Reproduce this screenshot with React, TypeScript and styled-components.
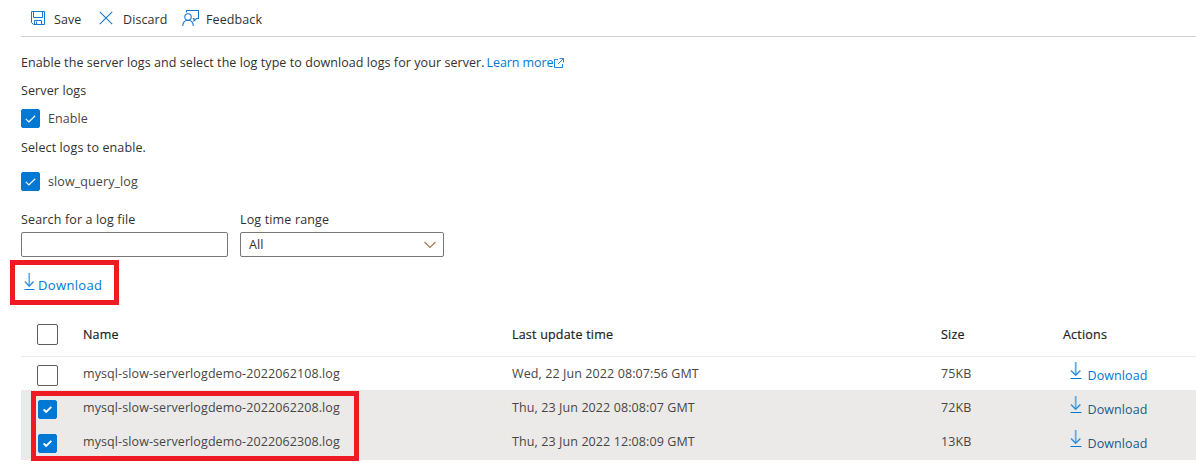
import React from 'react';
import styled, { createGlobalStyle } from 'styled-components';

const GlobalStyle = createGlobalStyle`
  * { box-sizing: border-box; }
  body {
    margin: 0;
    background: #fff;
    color: #323130;
    font: 12.5px/18px 'Open Sans', 'Noto Sans', sans-serif;
    letter-spacing: 0.1px;
    overflow: hidden;
  }
`;

const Page = styled.main`
  height: 468px;
  padding-left: 21px;
  display: flex;
  flex-direction: column;
`;

const Toolbar = styled.div`
  height: 37px;
  flex: none;
  display: flex;
  padding-left: 9px;
  border-bottom: 1px solid #d2d0ce;
`;

const Command = styled.button<{ $width: number; $gap: number }>`
  width: ${(p) => p.$width}px;
  height: 36px;
  padding: 0 0 1px;
  border: 0;
  background: none;
  display: flex;
  align-items: center;
  gap: ${(p) => p.$gap}px;
  font: inherit;
  color: inherit;
  letter-spacing: inherit;
  text-align: left;
  svg { flex: none; }
  span { padding-top: 4px; }
`;

const Line = styled.p<{ $top: number; $spacing?: number }>`
  margin: ${(p) => p.$top}px 0 0;
  height: 18px;
  display: flex;
  flex: none;
  white-space: nowrap;
  letter-spacing: ${(p) => p.$spacing ?? 0.12}px;
`;

const Link = styled.a`
  display: flex;
  align-items: center;
  gap: 1px;
  margin-left: 2px;
  color: #0078d4;
  letter-spacing: -0.1px;
`;

const CheckField = styled.label<{ $top: number }>`
  margin-top: ${(p) => p.$top}px;
  height: 19px;
  flex: none;
  display: flex;
  align-items: center;
  gap: 8px;
  color: #484644;
`;

const Box = styled.span<{ $on?: boolean; $size: number }>`
  width: ${(p) => p.$size}px;
  height: ${(p) => p.$size}px;
  flex: none;
  display: flex;
  align-items: center;
  justify-content: center;
  border-radius: 2px;
  border: 1px solid ${(p) => (p.$on ? '#0078d4' : '#605e5c')};
  background: ${(p) => (p.$on ? '#0078d4' : '#fff')};
`;

const Filters = styled.div`
  display: flex;
  flex: none;
  gap: 12px;
  margin-top: 20px;
`;

const Field = styled.div<{ $width: number }>`
  width: ${(p) => p.$width}px;
  display: flex;
  flex-direction: column;
  gap: 3px;
  letter-spacing: 0.15px;
`;

const Control = styled.div`
  height: 25px;
  border: 1px solid #7a7877;
  border-radius: 2px;
  padding: 0 7px 0 8px;
  display: flex;
  align-items: center;
  justify-content: space-between;
`;

const BulkDownload = styled.div`
  width: 109px;
  height: 45px;
  flex: none;
  margin: 3px 0 0 -11px;
  border: 5px solid #ee1b24;
  padding: 8px 0 0 9px;
  display: flex;
  gap: 3px;
  color: #0078d4;
  font-size: 13px;
  letter-spacing: 0.35px;
  span { padding-top: 3px; }
`;

const Grid = styled.div`
  margin-top: 7px;
  position: relative;
`;

const GridRow = styled.div<{ $head?: boolean; $selected?: boolean; $height: number; $bottom?: number }>`
  height: ${(p) => p.$height}px;
  padding-bottom: ${(p) => p.$bottom ?? 0}px;
  display: grid;
  grid-template-columns: 62px 429px 429px 122px 1fr;
  align-items: center;
  color: ${(p) => (p.$head ? '#201f1e' : '#484644')};
  background: ${(p) => (p.$selected ? '#ebeae8' : '#fff')};
  border-bottom: ${(p) => (p.$head ? '1px solid #edebe9' : '0')};
`;

const HeadCell = styled.span`
  padding-top: 2px;
  letter-spacing: 0.2px;
  -webkit-text-stroke: 0.2px currentColor;
`;

const CheckCell = styled.div<{ $left: number; $drop: number }>`
  padding: ${(p) => p.$drop}px 0 0 ${(p) => p.$left}px;
`;

const ActionLink = styled.a<{ $dim?: boolean }>`
  display: flex;
  gap: 6px;
  padding-left: 6.5px;
  height: 24px;
  color: ${(p) => (p.$dim ? '#205a85' : '#0078d4')};
  span { padding-top: 5px; }
`;

const Highlight = styled.div`
  position: absolute;
  left: 10px;
  top: 79px;
  width: 328px;
  height: 70px;
  border: 5px solid #ee1b24;
`;

const SaveIcon = () => (
  <svg width="16" height="16" viewBox="0 0 16 16" fill="none" stroke="#1877cc">
    <path d="M1.5 1.5h13v13h-11l-2-2zM3.5 1.5v6h9v-6M4.5 14.500v-4h7v4M6.500 11.500v3" />
  </svg>
);

const DiscardIcon = () => (
  <svg width="14" height="14" viewBox="0 0 14 14" fill="none" stroke="#1877cc" strokeWidth="1.1">
    <path d="M.8.8l12.4 12.4M13.2.8L.8 13.2" />
  </svg>
);

const FeedbackIcon = () => (
  <svg width="17" height="18" viewBox="0 0 17 18" fill="none" stroke="#1877cc" strokeWidth="1.1">
    <path d="M4.500 3.200V1.500h12v8h-2l-2.500 2.400V9.500h-1.200" />
    <circle cx="6" cy="8" r="3.200" />
    <path d="M.7 17c.2-3.500 2.400-5.800 5.300-5.800s5.100 2.300 5.300 5.800" />
  </svg>
);

const ExternalIcon = () => (
  <svg width="10" height="10" viewBox="0 0 10 10" fill="none" stroke="#1877cc" strokeWidth=".9">
    <path d="M4 1.500H.5v8h8V6M5.500.5h4v4M9.500.5L4 6" />
  </svg>
);

const ChevronIcon = () => (
  <svg width="12" height="8" viewBox="0 0 12 8" fill="none" stroke="#a8764e" strokeWidth="1.1">
    <path d="M.5 1L6 6.500 11.500 1" />
  </svg>
);

const DownloadIcon = ({ width = 12 }: { width?: number }) => (
  <svg width={width} height="18" viewBox="0 0 12 18" preserveAspectRatio="none" fill="none">
    <path d="M5.700 0v13" stroke="#62ace4" strokeWidth="1.800" />
    <path d="M1 8.500l4.700 4.800 4.700-4.800" stroke="#2c8ddb" strokeWidth="1.400" />
    <path d="M.5 16.500h11" stroke="#0078d4" />
  </svg>
);

const Tick = ({ bold }: { bold?: boolean }) => (
  <svg width={bold ? 9 : 11} height={bold ? 7 : 8} viewBox="0 0 11 8" fill="none" stroke="#fff" strokeWidth={bold ? 2.4 : 1.2}>
    <path d="M.8 3.900l3.100 3L10.200.8" />
  </svg>
);

const logs = [
  { name: 'mysql-slow-serverlogdemo-2022062108.log', time: 'Wed, 22 Jun 2022 08:07:56 GMT', size: '75KB', selected: false, height: 33, bottom: 0, drop: 4 },
  { name: 'mysql-slow-serverlogdemo-2022062208.log', time: 'Thu, 23 Jun 2022 08:08:07 GMT', size: '72KB', selected: true, height: 35, bottom: 0, drop: 4 },
  { name: 'mysql-slow-serverlogdemo-2022062308.log', time: 'Thu, 23 Jun 2022 12:08:09 GMT', size: '13KB', selected: true, height: 35, bottom: 1, drop: 3 },
];

export default function App() {
  return (
    <>
      <GlobalStyle />
      <Page>
        <Toolbar>
          <Command $width={69} $gap={8}><SaveIcon /><span>Save</span></Command>
          <Command $width={83} $gap={10}><DiscardIcon /><span>Discard</span></Command>
          <Command $width={90} $gap={7}><FeedbackIcon /><span>Feedback</span></Command>
        </Toolbar>
        <Line $top={17} $spacing={0.07}>
          Enable the server logs and select the log type to download logs for your server.
          <Link>Learn more<ExternalIcon /></Link>
        </Line>
        <Line $top={10}>Server logs</Line>
        <CheckField $top={9}><Box $on $size={19}><Tick /></Box>Enable</CheckField>
        <Line $top={11}>Select logs to enable.</Line>
        <CheckField $top={15}><Box $on $size={19}><Tick /></Box>slow_query_log</CheckField>
        <Filters>
          <Field $width={207}><span>Search for a log file</span><Control /></Field>
          <Field $width={204}><span>Log time range</span><Control><span>All</span><ChevronIcon /></Control></Field>
        </Filters>
        <BulkDownload><DownloadIcon width={11} /><span>Download</span></BulkDownload>
        <Grid>
          <GridRow $head $height={45}>
            <CheckCell $left={16} $drop={1}><Box $size={21} /></CheckCell>
            <HeadCell>Name</HeadCell>
            <HeadCell>Last update time</HeadCell>
            <HeadCell>Size</HeadCell>
            <HeadCell>Actions</HeadCell>
          </GridRow>
          {logs.map((log) => (
            <GridRow key={log.name} $selected={log.selected} $height={log.height} $bottom={log.bottom}>
              <CheckCell $left={log.selected ? 17 : 16} $drop={log.drop}>
                <Box $on={log.selected} $size={log.selected ? 19 : 21}>{log.selected && <Tick bold />}</Box>
              </CheckCell>
              <span>{log.name}</span><span>{log.time}</span><span>{log.size}</span>
              <ActionLink $dim={log.selected}><DownloadIcon /><span>Download</span></ActionLink>
            </GridRow>
          ))}
          <Highlight />
        </Grid>
      </Page>
    </>
  );
}
